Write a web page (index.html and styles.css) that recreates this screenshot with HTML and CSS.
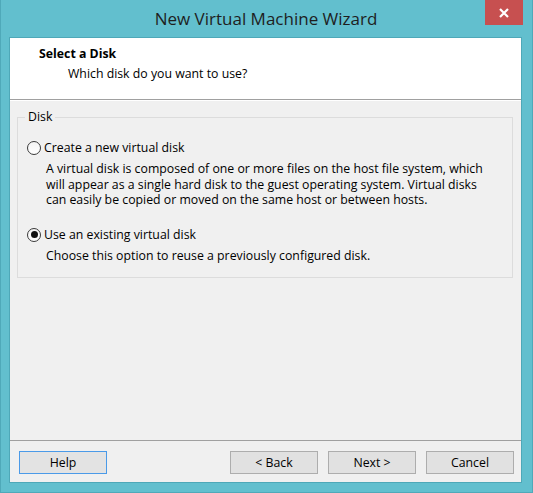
FILE: index.html
```html
<!DOCTYPE html>
<html>
<head>
<meta charset="utf-8">
<link rel="stylesheet" href="styles.css">
</head>
<body>
<div class="window">
  <div class="titlebar">
    <span class="title">New Virtual Machine Wizard</span>
    <span class="close"><svg width="12" height="10" viewBox="0 0 12 10"><path d="M2 1 L10 9 M10 1 L2 9" stroke="#fff" stroke-width="2.2" fill="none"/></svg></span>
  </div>
  <div class="client">
    <div class="header">
      <div class="h-title">Select a Disk</div>
      <div class="h-sub">Which disk do you want to use?</div>
    </div>
    <div class="content">
      <fieldset class="group">
        <legend class="legend">Disk</legend>
        <div class="option">
          <span class="radio"></span>
          <span class="opt-label">Create a new virtual disk</span>
        </div>
        <div class="desc">A virtual disk is composed of one or more files on the host file system, which will appear as a single hard disk to the guest operating system. Virtual disks can easily be copied or moved on the same host or between hosts.</div>
        <div class="option second">
          <span class="radio checked"></span>
          <span class="opt-label">Use an existing virtual disk</span>
        </div>
        <div class="desc last">Choose this option to reuse a previously configured disk.</div>
      </fieldset>
    </div>
    <div class="footer">
      <button class="btn default">Help</button>
      <span class="spacer"></span>
      <button class="btn">&lt; Back</button>
      <button class="btn">Next &gt;</button>
      <button class="btn">Cancel</button>
    </div>
  </div>
</div>
</body>
</html>
```

FILE: styles.css
```css
html, body {
  margin: 0;
  padding: 0;
}
body {
  width: 533px;
  height: 493px;
  background: #62bfce;
  font-family: "Open Sans", "Noto Sans", sans-serif;
  font-size: 12.3px;
  color: #000;
  overflow: hidden;
}
.window {
  width: 533px;
  height: 493px;
  box-sizing: border-box;
  border: 1px solid #4fa9b9;
  border-top: none;
  padding: 0 10px 9px 8px;
  display: flex;
  flex-direction: column;
}
.titlebar {
  position: relative;
  height: 38px;
  display: flex;
  justify-content: center;
  align-items: flex-start;
}
.title {
  font-size: 17px;
  color: #1e1e1e;
  margin-top: 7px;
  margin-left: 1px;
  line-height: 24px;
}
.close {
  position: absolute;
  right: -1px;
  top: 0;
  width: 38px;
  height: 25px;
  background: #c75050;
  display: flex;
  align-items: center;
  justify-content: center;
}
.client {
  flex: 1;
  display: flex;
  flex-direction: column;
  background: #f0f0f0;
  border: 1px solid #4ea8b8;
  margin-top: -1px;
}
.header {
  background: #fff;
  height: 62px;
  box-sizing: border-box;
  padding: 8px 0 0 29px;
  border-bottom: 1px solid #a0a0a0;
}
.h-title {
  font-weight: bold;
  line-height: 16px;
}
.h-sub {
  margin-top: 4px;
  margin-left: 29px;
  line-height: 16px;
}
.content {
  flex: 1;
  border-top: 1px solid #fff;
  padding: 9px 8px 0 7px;
}
.group {
  margin: 0;
  padding: 0 7px 0 7px;
  border: 1px solid #dcdcdc;
  height: 168px;
  box-sizing: border-box;
}
.legend {
  padding: 0 3px;
  line-height: 14px;
  color: #000;
}
.option {
  display: flex;
  align-items: center;
  margin-top: 16px;
  margin-left: 2px;
  height: 16px;
}
.option.second {
  margin-top: 19px;
}
.radio {
  width: 12px;
  height: 12px;
  border: 1px solid #3a3a3a;
  border-radius: 50%;
  background: linear-gradient(#f4f4f4, #ffffff);
  display: flex;
  align-items: center;
  justify-content: center;
  flex: none;
}
.radio.checked::after {
  content: "";
  width: 7px;
  height: 7px;
  border-radius: 50%;
  background: #111;
}
.opt-label {
  margin-left: 3px;
  line-height: 16px;
}
.desc {
  margin-left: 21px;
  margin-top: 5px;
  line-height: 15.5px;
  width: 448px;
}
.desc.last {
  margin-top: 5px;
}
.footer {
  height: 42px;
  box-sizing: border-box;
  border-top: 1px solid #a0a0a0;
  display: flex;
  align-items: flex-start;
  padding: 10px 7px 0 9px;
  gap: 10px;
}
.spacer {
  flex: 1;
}
.btn {
  width: 88px;
  height: 23px;
  box-sizing: border-box;
  border: 1px solid #adadad;
  background: #e1e1e1;
  font-family: "Open Sans", "Noto Sans", sans-serif;
  font-size: 12.3px;
  color: #000;
  padding: 0;
  margin: 0;
}
.btn.default {
  border-color: #4a9ae8;
  background: #e3e3e3;
}
```
